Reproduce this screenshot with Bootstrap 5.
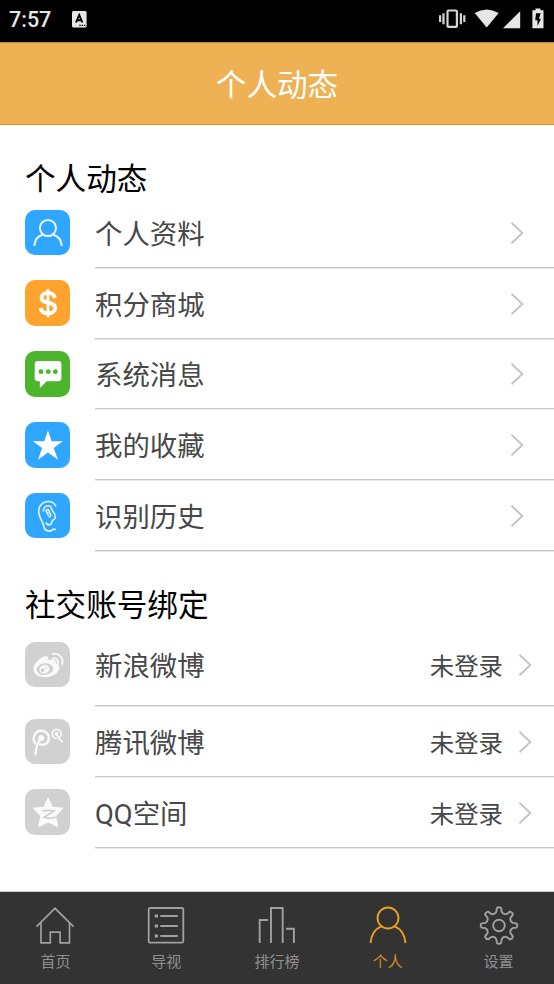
<!DOCTYPE html>
<html lang="zh-CN">
<head>
  <meta charset="UTF-8">
  <meta name="viewport" content="width=device-width, initial-scale=1.0">
  <title>个人动态</title>
  <link href="https://cdn.jsdelivr.net/npm/bootstrap@5.3.0/dist/css/bootstrap.min.css" rel="stylesheet">
  <style>
    body {
      font-family: Roboto, "Noto Sans CJK SC", sans-serif;
      background: #fff;
      height: 984px;
      overflow: hidden;
    }
    svg { display: block; flex: none; }
    .status-bar {
      height: 42px;
      background: #000;
      color: #e6e6e6;
      padding: 0 9px 4px 9px;
      font-size: 21.5px;
      font-weight: 500;
    }
    .title-bar {
      height: 83px;
      background: #eeb153;
      border-top: 1px solid #b98a42;
      border-bottom: 1px solid #d8951d;
      color: #fff;
      font-size: 30.6px;
      padding-top: 5px;
    }
    .section-title {
      font-size: 30.6px;
      font-weight: 400;
      line-height: 40px;
      color: #000;
      margin: 0;
      padding: 35px 0 0 25px;
    }
    .menu { margin-top: -3px; }
    .menu-row {
      height: 70.8px;
      padding-left: 24.5px;
      color: #484848;
      font-size: 27.4px;
      line-height: 36px;
    }
    .menu-row .row-text {
      margin-left: 25px;
      padding-top: 2px;
      padding-right: 30px;
      border-bottom: 1px solid #c8c8c8;
      box-shadow: 0 1px #e8e8e8;
    }
    .menu-row .row-text span { padding-top: 4px; }
    .menu-row.tall { height: 77px; }
    .menu-row.tall .row-text { padding-bottom: 6px; }
    .menu-row.tall .tile { margin-bottom: 6px; }
    .social { margin-top: 3px; }
    .social .row-text { padding-right: 22px; }
    .tile {
      width: 45.5px;
      height: 45.5px;
      border-radius: 10px;
      flex: none;
    }
    .tile svg { width: 100%; height: 100%; }
    .tile-blue { background: #2fa6ff; }
    .tile-orange { background: #ffa32f; }
    .tile-green { background: #4bb52d; }
    .tile-gray { background: #d1d1d1; }
    .state { font-size: 24.4px; margin-right: 15px; }
    .tab-bar {
      height: 93px;
      background: #333;
      border-top: 1px solid #d0d0d0;
      color: #a0a0a0;
      font-size: 15px;
      line-height: 20px;
    }
    .tab-bar .tab-item { padding-top: 13.5px; }
    .tab-bar .tab-item.on { color: #e9a025; }
    .tab-bar span { margin-top: 7.500px; opacity: .85; }
  </style>
</head>
<body class="d-flex flex-column">

  <!-- Status bar -->
  <div class="status-bar d-flex align-items-center">
    <span style="padding-top:2px">7:57</span>
    <svg width="15" height="17" viewBox="0 0 15 17" style="margin-left:21px">
      <rect x="0" y="0" width="14.6" height="16.4" rx="1.5" fill="#e6e6e6"/>
      <path d="M4 11.5 7.2 4 10.4 11.5M5.2 9.3h4" fill="none" stroke="#000" stroke-width="1.9"/>
      <path d="M7.3 14.3h1.4M9.6 14.3H11M11.9 14.3h1.4" stroke="#000" stroke-width="1.3"/>
    </svg>
    <svg class="ms-auto" width="106" height="22" viewBox="0 0 106 22">
      <g fill="none" stroke="#d5d5d5" stroke-width="2.2">
        <rect x="8.5" y="2.5" width="9.4" height="16.4" rx="1"/>
        <path d="M1.1 7.300v6.800M4.500 5.200v11M21.900 5.200v11M25.300 7.300v6.800"/>
      </g>
      <path d="M35.700 5Q47.500-2.200 59.700 5L47.700 19.600z" fill="#e6e6e6"/>
      <path d="M81.200 3.200v17H64z" fill="#e6e6e6"/>
      <path d="M96.500.4h5v1.800h3v18H93.400v-18h3.100z" fill="#e6e6e6"/>
      <path d="M97 5.300 96.200 12.300h2.300v5.700l3.500-7.300h-2.200L101.800 5.300z" fill="#000"/>
    </svg>
  </div>

  <!-- Title -->
  <header class="title-bar d-flex justify-content-center align-items-center">个人动态</header>

  <main class="flex-grow-1">
    <h1 class="section-title">个人动态</h1>

    <div class="menu">
      <div class="menu-row d-flex align-items-center">
        <div class="tile tile-blue">
          <svg viewBox="0 0 45 45" fill="none" stroke="#e9f5ff" stroke-width="2"><circle cx="22.7" cy="17.8" r="8"/><path d="M9.2 35.6C9.5 30 12.8 25.500 18 24.200M27.400 24.200C32.600 25.500 36 30 36.400 35.600"/></svg>
        </div>
        <div class="row-text d-flex align-items-center flex-grow-1 h-100">
          <span>个人资料</span>
          <svg class="ms-auto" width="14" height="24" viewBox="0 0 14 24"><path d="M1.5 1.8 12.3 12 1.5 22.2" fill="none" stroke="#c4c4c4" stroke-width="1.9"/></svg>
        </div>
      </div>
      <div class="menu-row d-flex align-items-center">
        <div class="tile tile-orange">
          <svg viewBox="0 0 45 45" fill="none" stroke="#fff" stroke-width="3.8"><path d="M29.500 17.700C28.600 14.300 26 12.800 22.800 12.800 19 12.800 16.400 14.600 16.400 17.600 16.400 24.500 29.800 20.200 29.800 27.800 29.800 31.200 27 33.100 23 33.100 18.800 33.100 16 31 15.400 27.500"/><path d="M22.700 9v27.900" stroke-width="2.800"/></svg>
        </div>
        <div class="row-text d-flex align-items-center flex-grow-1 h-100">
          <span>积分商城</span>
          <svg class="ms-auto" width="14" height="24" viewBox="0 0 14 24"><path d="M1.5 1.8 12.3 12 1.5 22.2" fill="none" stroke="#c4c4c4" stroke-width="1.9"/></svg>
        </div>
      </div>
      <div class="menu-row d-flex align-items-center">
        <div class="tile tile-green">
          <svg viewBox="0 0 45 45"><path d="M13 10h19.800q3.200 0 3.200 3.200v13.600q0 3.200-3.200 3.200H21.500l-6.800 6.500V30H13q-3.400 0-3.400-3.200V13.200Q9.600 10 13 10z" fill="#fff"/><g fill="#4bb52d"><circle cx="15.800" cy="20.400" r="2.400"/><circle cx="23" cy="20.400" r="2.400"/><circle cx="30" cy="20.400" r="2.400"/></g></svg>
        </div>
        <div class="row-text d-flex align-items-center flex-grow-1 h-100">
          <span>系统消息</span>
          <svg class="ms-auto" width="14" height="24" viewBox="0 0 14 24"><path d="M1.5 1.8 12.3 12 1.5 22.2" fill="none" stroke="#c4c4c4" stroke-width="1.9"/></svg>
        </div>
      </div>
      <div class="menu-row d-flex align-items-center">
        <div class="tile tile-blue">
          <svg viewBox="0 0 45 45"><path d="M22.700 8.300 26.300 19h11.100l-9 6.800 4.200 11.500-9.900-7.100-9.800 7.100 4-11.500-9.200-6.800h11.300z" fill="#fff"/></svg>
        </div>
        <div class="row-text d-flex align-items-center flex-grow-1 h-100">
          <span>我的收藏</span>
          <svg class="ms-auto" width="14" height="24" viewBox="0 0 14 24"><path d="M1.5 1.8 12.3 12 1.5 22.2" fill="none" stroke="#c4c4c4" stroke-width="1.9"/></svg>
        </div>
      </div>
      <div class="menu-row d-flex align-items-center">
        <div class="tile tile-blue">
          <svg viewBox="0 0 45 45" fill="none" stroke="#e3f2ff" stroke-width="1.6" stroke-linecap="round" stroke-linejoin="round"><path d="M30.300 12.800C28.800 9.600 25 8 21 8.600 15.500 9.500 12.800 15 13.800 20.500 14.600 25.500 18 29 18.600 33 19 37.300 24 38.800 26.800 36.600 28.300 35.300 30 36 30 36"/><path d="M18.200 17.800C18.500 13.200 22 11.800 24.600 13 27.500 14.500 25.500 17 28 18.800 29.300 20 30 22 30 24.500 30 26.500 26.600 26 26.400 29 26.300 32 21.600 32.500 21 29.400"/><path d="M20.800 17.500C22.500 15 24.500 17 23.800 19.300 26.500 20.500 25.500 23.500 24 23.800M20.800 17.500 23 22"/></svg>
        </div>
        <div class="row-text d-flex align-items-center flex-grow-1 h-100">
          <span>识别历史</span>
          <svg class="ms-auto" width="14" height="24" viewBox="0 0 14 24"><path d="M1.5 1.8 12.3 12 1.5 22.2" fill="none" stroke="#c4c4c4" stroke-width="1.9"/></svg>
        </div>
      </div>
    </div>

    <h2 class="section-title">社交账号绑定</h2>

    <div class="menu social">
      <div class="menu-row tall d-flex align-items-center">
        <div class="tile tile-gray">
          <!-- weibo -->
          <svg viewBox="0 0 45 45"><path d="M8.300 27C8.300 21.500 16 14.200 20.400 14.200 23 14.200 23.600 16.200 23 18.300 27 16.700 31.200 17 30.300 21 34 22 34.500 24.500 33.800 27 32.300 32 26 34.800 20 34.800 13.500 34.800 8.300 31.700 8.300 27z" fill="#fafafa"/><ellipse cx="19.700" cy="26.800" rx="8.300" ry="5.800" transform="rotate(-7 19.700 26.800)" fill="#d1d1d1"/><ellipse cx="19.200" cy="27" rx="5" ry="4.200" transform="rotate(-15 19.200 27)" fill="#fafafa"/><circle cx="17.500" cy="28" r="1.700" fill="#cacaca"/><circle cx="20.900" cy="25.800" r=".8" fill="#cacaca"/><path d="M27.700 16.200C31 15.500 33.300 18 32.500 21.400M27.500 11.900C33.700 10.700 38.600 16 36.700 22" fill="none" stroke="#f7f7f7" stroke-width="1.900" stroke-linecap="round"/></svg>
        </div>
        <div class="row-text d-flex align-items-center flex-grow-1 h-100">
          <span>新浪微博</span>
          <span class="state ms-auto">未登录</span>
          <svg width="14" height="24" viewBox="0 0 14 24"><path d="M1.5 1.8 12.3 12 1.5 22.2" fill="none" stroke="#c4c4c4" stroke-width="1.9"/></svg>
        </div>
      </div>
      <div class="menu-row d-flex align-items-center">
        <div class="tile tile-gray">
          <!-- tencent weibo -->
          <svg viewBox="0 0 45 45" fill="none" stroke="#fafafa" stroke-linecap="round"><path d="M10 24C6.800 19.500 9.300 11.600 16 11.600 21 11.600 24 15.300 23.600 19.300 23.200 24 19 26.300 15.200 25.200" stroke-width="2.300"/><path d="M15.700 19.500C12.500 23.500 10.500 29 10.600 35" stroke-width="2.200"/><circle cx="16" cy="18.800" r="2.900" fill="#fafafa" stroke="none"/><path d="M30.700 19.200C26.500 18.800 25.500 12.800 29 11 32.500 9.200 36.200 11.700 35.900 15 35.800 16.500 35 17.600 34 18.300" stroke-width="1.500"/><path d="M31 14.800C32.600 18.500 34.700 21 37 22.600" stroke-width="1.500"/><circle cx="31" cy="14.700" r="1.800" fill="#fafafa" stroke="none"/></svg>
        </div>
        <div class="row-text d-flex align-items-center flex-grow-1 h-100">
          <span>腾讯微博</span>
          <span class="state ms-auto">未登录</span>
          <svg width="14" height="24" viewBox="0 0 14 24"><path d="M1.5 1.8 12.3 12 1.5 22.2" fill="none" stroke="#c4c4c4" stroke-width="1.9"/></svg>
        </div>
      </div>
      <div class="menu-row d-flex align-items-center">
        <div class="tile tile-gray">
          <!-- qzone -->
          <svg viewBox="0 0 45 45"><path d="M22.900 9.400 27 18.300 37 19 29.800 26.600 32.200 36.800 22.900 32.300 13.800 36.800 16 26.600 8.800 19 18.800 18.300z" fill="#fafafa" stroke="#fafafa" stroke-width="1.500" stroke-linejoin="round"/><path d="M17.300 21.800C21 20.900 25 20.900 28.700 21.900L18.700 28C22 29 27 28.800 30.200 28" fill="none" stroke="#cfcfcf" stroke-width="1.600"/></svg>
        </div>
        <div class="row-text d-flex align-items-center flex-grow-1 h-100">
          <span>QQ空间</span>
          <span class="state ms-auto">未登录</span>
          <svg width="14" height="24" viewBox="0 0 14 24"><path d="M1.5 1.8 12.3 12 1.5 22.2" fill="none" stroke="#c4c4c4" stroke-width="1.9"/></svg>
        </div>
      </div>
    </div>
  </main>

  <!-- Bottom tabs -->
  <nav class="tab-bar row g-0 text-center">
    <div class="tab-item col d-flex flex-column align-items-center">
      <svg width="40" height="39" viewBox="0 0 40 39" fill="none" stroke="#a0a0a0" stroke-width="1.7"><path d="M1.500 20.700 20 2.300 38.500 20.700M6 17v19.900h9.300V26.200h9.800v10.700h9.400V17"/></svg>
      <span>首页</span>
    </div>
    <div class="tab-item col d-flex flex-column align-items-center">
      <svg width="38" height="39" viewBox="0 0 38 39" fill="none" stroke="#a0a0a0" stroke-width="1.8"><rect x="1.700" y="2" width="34.600" height="34.700" rx="1.500"/><path d="M13.300 10h17.500M13.300 20h17.500M13.300 30h17.500"/><path d="M7.700 10H11M7.700 20H11M7.700 30H11" stroke-width="3.200"/></svg>
      <span>导视</span>
    </div>
    <div class="tab-item col d-flex flex-column align-items-center">
      <svg width="38" height="39" viewBox="0 0 38 39" fill="none" stroke="#a0a0a0" stroke-width="1.9"><path d="M1.700 37V14h8.400M13 37V2h11.700V37M28 22.700h7.900V37"/></svg>
      <span>排行榜</span>
    </div>
    <div class="tab-item on col d-flex flex-column align-items-center">
      <svg width="38" height="39" viewBox="0 0 38 39" fill="none" stroke="#e9a025" stroke-width="1.9"><circle cx="19" cy="12" r="10.500"/><path d="M1.600 37C1.800 29.300 6 22.800 12.300 20.300M25.700 20.300C32 22.800 36.200 29.300 36.400 37"/></svg>
      <span>个人</span>
    </div>
    <div class="tab-item col d-flex flex-column align-items-center">
      <svg width="40" height="39" viewBox="0 0 40 39" fill="none" stroke="#a0a0a0" stroke-width="1.9" stroke-linejoin="round"><circle cx="20" cy="19.500" r="5.800"/><path id="gear"/></svg>
      <span>设置</span>
    </div>
  </nav>

  <script src="https://cdn.jsdelivr.net/npm/bootstrap@5.3.0/dist/js/bootstrap.bundle.min.js"></script>
  <script>
    // eight rounded teeth around the centre of the settings icon
    function point(r, deg) {
      const a = deg * Math.PI / 180;
      return (20 + r * Math.cos(a)).toFixed(2) + ' ' + (19.5 + r * Math.sin(a)).toFixed(2);
    }
    let d = '';
    for (let i = 0; i < 8; i++) {
      const a = i * 45;
      d += (i ? 'L' : 'M') + point(14, a - 11) + 'L' + point(17.6, a - 7);
      d += 'Q' + point(19.2, a) + ' ' + point(17.6, a + 7);
      d += 'L' + point(14, a + 11) + 'Q' + point(11.3, a + 22.5) + ' ' + point(14, a + 34);
    }
    document.getElementById('gear').setAttribute('d', d + 'Z');
  </script>
</body>
</html>
